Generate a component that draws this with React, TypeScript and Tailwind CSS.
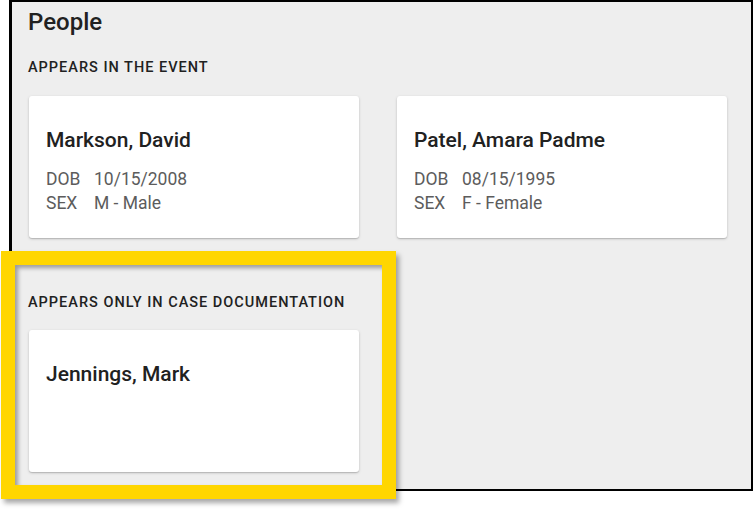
import React from 'react';

type Person = {
  name: string;
  dob?: string;
  sex?: string;
};

const inEvent: Person[] = [
  { name: 'Markson, David', dob: '10/15/2008', sex: 'M - Male' },
  { name: 'Patel, Amara Padme', dob: '08/15/1995', sex: 'F - Female' },
];

const caseOnly: Person[] = [{ name: 'Jennings, Mark' }];

const PersonCard: React.FC<{ person: Person }> = ({ person }) => (
  <div className="h-[142px] rounded-[3px] bg-white pt-[30px] px-[17px] shadow-[0_1px_3px_rgba(0,0,0,0.18),0_1px_1px_rgba(0,0,0,0.12)]">
    <div className="text-[21px] leading-7 font-medium text-[#212121]">{person.name}</div>
    {person.dob && (
      <div className="mt-[13px] grid grid-cols-[48px_1fr] text-[17.5px] leading-6 text-[#5c5c5c]">
        <span>DOB</span>
        <span>{person.dob}</span>
        <span>SEX</span>
        <span>{person.sex}</span>
      </div>
    )}
  </div>
);

const SectionLabel: React.FC<{ children: React.ReactNode }> = ({ children }) => (
  <div className="text-[14.5px] leading-5 font-medium uppercase tracking-[1px] text-[#212121]">{children}</div>
);

export default function App() {
  return (
    <div className="relative w-[753px] h-[514px] bg-white font-['Roboto','Liberation_Sans',sans-serif]">
      <div className="ml-[9px] w-[744px] h-[491px] border-2 border-l-[3px] border-black bg-[#eeeeee] pl-4 pt-1">
        <h2 className="text-[24px] leading-8 font-medium text-[#212121]">People</h2>

        <div className="mt-[20px]">
          <SectionLabel>Appears in the event</SectionLabel>
        </div>
        <div className="mt-[18px] ml-px grid grid-cols-[330px_330px] gap-x-[38px]">
          {inEvent.map((p) => (
            <PersonCard key={p.name} person={p} />
          ))}
        </div>

        <div className="mt-[55px]">
          <SectionLabel>Appears only in case documentation</SectionLabel>
        </div>
        <div className="mt-[17px] ml-px grid grid-cols-[330px_330px] gap-x-[38px]">
          {caseOnly.map((p) => (
            <PersonCard key={p.name} person={p} />
          ))}
        </div>
      </div>

      {/* highlight frame over the case documentation section */}
      <div className="absolute left-px top-[251px] w-[395px] h-[248px] border-[14px] border-[#ffd600] shadow-[3px_4px_5px_rgba(0,0,0,0.35),inset_3px_3px_4px_rgba(0,0,0,0.35)]" />
    </div>
  );
}
